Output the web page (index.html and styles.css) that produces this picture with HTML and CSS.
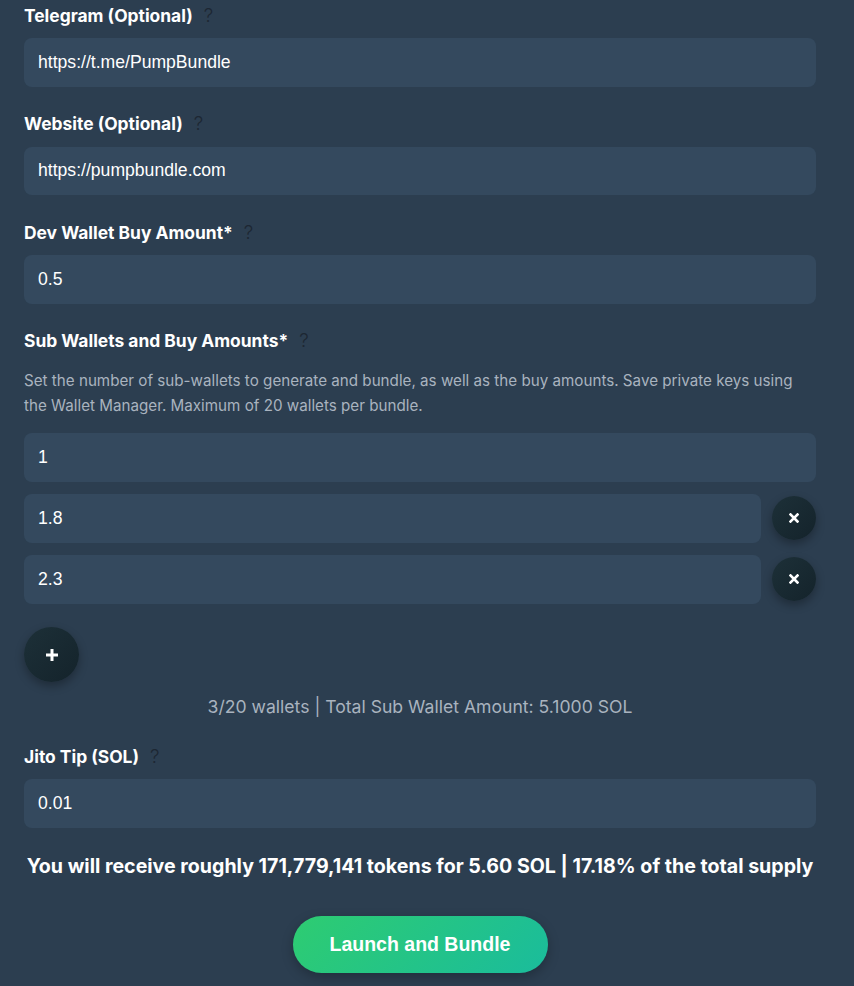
FILE: index.html
```html
<html lang="en">

<head>
	<meta charset="UTF-8" />
	<meta name="viewport" content="width=device-width, initial-scale=1.0" />
	<title>Pump Bundle</title>
<link rel="stylesheet" href="styles.css">
</head>

<body>
	<main class="bundle-form">
		<div class="bundle-form__group">
			<label class="bundle-form__label">Telegram (Optional) <span class="bundle-form__help">?</span></label>
			<input class="bundle-form__input" type="text" value="https://t.me/PumpBundle">
		</div>
		<div class="bundle-form__group">
			<label class="bundle-form__label">Website (Optional) <span class="bundle-form__help">?</span></label>
			<input class="bundle-form__input" type="text" value="https://pumpbundle.com">
		</div>
		<div class="bundle-form__group">
			<label class="bundle-form__label">Dev Wallet Buy Amount* <span class="bundle-form__help">?</span></label>
			<input class="bundle-form__input" type="text" value="0.5">
		</div>
		<div class="bundle-form__group">
			<label class="bundle-form__label">Sub Wallets and Buy Amounts* <span class="bundle-form__help">?</span></label>
			<p class="bundle-form__desc">Set the number of sub-wallets to generate and bundle, as well as the buy amounts. Save private keys using the Wallet Manager. Maximum of 20 wallets per bundle.</p>
			<div class="wallet-list">
				<div class="wallet-list__row">
					<input class="bundle-form__input" type="text" value="1">
				</div>
				<div class="wallet-list__row">
					<input class="bundle-form__input" type="text" value="1.8">
					<button class="round-btn round-btn--remove" type="button">
						<svg width="10" height="10" viewBox="0 0 10 10"><path d="M1.5 1.5l7 7M8.5 1.5l-7 7" stroke="#fff" stroke-width="2.6" stroke-linecap="square"/></svg>
					</button>
				</div>
				<div class="wallet-list__row">
					<input class="bundle-form__input" type="text" value="2.3">
					<button class="round-btn round-btn--remove" type="button">
						<svg width="10" height="10" viewBox="0 0 10 10"><path d="M1.5 1.5l7 7M8.5 1.5l-7 7" stroke="#fff" stroke-width="2.6" stroke-linecap="square"/></svg>
					</button>
				</div>
			</div>
			<button class="round-btn round-btn--add" type="button">
				<svg width="14" height="14" viewBox="0 0 14 14"><path d="M7 1v12M1 7h12" stroke="#fff" stroke-width="3"/></svg>
			</button>
			<p class="wallet-summary">3/20 wallets | Total Sub Wallet Amount: 5.1000 SOL</p>
		</div>
		<div class="bundle-form__group">
			<label class="bundle-form__label">Jito Tip (SOL) <span class="bundle-form__help">?</span></label>
			<input class="bundle-form__input" type="text" value="0.01">
		</div>
		<p class="bundle-form__estimate">You will receive roughly 171,779,141 tokens for 5.60 SOL | 17.18% of the total supply</p>
		<div class="bundle-form__actions">
			<button class="bundle-form__submit" type="submit">Launch and Bundle</button>
		</div>
	</main>
</body>

</html>
```

FILE: styles.css
```css
body{
  margin: 0;
  background-color: #2c3e50;
  color: #fff;
  font-family: Inter, "Noto Sans", sans-serif;
}

.bundle-form{
  width: 792px;
  padding: 3px 0 0 24px;
}

.bundle-form__group{
  display: flex;
  flex-direction: column;
  margin-bottom: 25px;
}

.bundle-form__label{
  display: flex;
  align-items: center;
  height: 24px;
  font-size: 17.4px;
  font-weight: 700;
  margin-bottom: 11px;
}

.bundle-form__help{
  margin-left: 11px;
  font-size: 19px;
  font-weight: 300;
  color: #1d2733;
}

.bundle-form__input{
  box-sizing: border-box;
  width: 100%;
  height: 48.5px;
  padding: 0 14px;
  border: none;
  border-radius: 8px;
  background-color: #34495e;
  color: #fff;
  font-family: "Liberation Sans", Arial, sans-serif;
  font-size: 17.6px;
  outline: none;
}

.bundle-form__desc{
  margin: 4px 0 15.5px 0;
  font-size: 15.2px;
  line-height: 25px;
  color: #a9b3bf;
}

.wallet-list{
  display: flex;
  flex-direction: column;
  gap: 12.5px;
}

.wallet-list__row{
  display: flex;
  align-items: center;
  gap: 11px;
}

.round-btn{
  flex-shrink: 0;
  display: flex;
  align-items: center;
  justify-content: center;
  border: none;
  border-radius: 50%;
  padding: 0;
  background: linear-gradient(135deg, #1d3038, #14232b);
  box-shadow: 0 4px 10px rgba(0, 0, 0, .3);
}

.round-btn--remove{
  width: 44px;
  height: 44px;
}

.round-btn--add{
  width: 55px;
  height: 55px;
  margin-top: 23.5px;
}

.wallet-summary{
  margin: 13px 0 0 0;
  text-align: center;
  font-size: 17.6px;
  line-height: 24px;
  color: #a9b3bf;
}

.bundle-form__estimate{
  margin: -1px 0 0 0;
  text-align: center;
  font-size: 19.6px;
  font-weight: 700;
  line-height: 28px;
}

.bundle-form__actions{
  display: flex;
  justify-content: center;
  margin-top: 36px;
}

.bundle-form__submit{
  width: 255px;
  height: 57px;
  border: none;
  border-radius: 29px;
  background: linear-gradient(135deg, #2ecc71, #1abc9c);
  color: #fff;
  font-family: "Liberation Sans", Arial, sans-serif;
  font-size: 19.5px;
  font-weight: 700;
  box-shadow: 0 4px 12px rgba(0, 0, 0, .25);
}
```
